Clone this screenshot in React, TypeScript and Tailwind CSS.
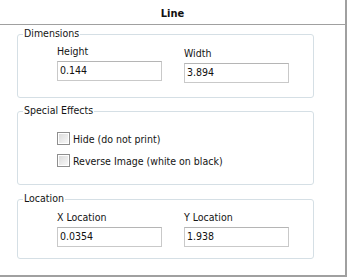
import React from "react";

const font = { fontFamily: '"DejaVu Sans Condensed", "Liberation Sans", Arial, sans-serif' };

function GroupBox({ title, className, children }: { title: string; className: string; children: React.ReactNode }) {
  return (
    <div className={`relative ml-[17px] w-[297px] rounded-[3px] border border-[#d5dfe5] ${className}`}>
      <span className="absolute left-[5px] top-[-9px] bg-white px-[1px] text-[10.5px] leading-[14px] text-[#141414]">
        {title}
      </span>
      {children}
    </div>
  );
}

function Field({ label, value, className = "" }: { label: string; value: string; className?: string }) {
  return (
    <div className={`flex w-[105px] flex-col ${className}`}>
      <span className="text-[10.5px] leading-[14px] text-[#141414]">{label}</span>
      <div className="mt-[3px] flex h-[20px] items-center border border-[#c9c9c9] border-t-[#b5b5b5] bg-white pl-[2px] text-[10.5px] text-[#111]">
        {value}
      </div>
    </div>
  );
}

function Check({ label }: { label: string }) {
  return (
    <div className="flex h-[13px] items-center gap-[3px]">
      <div className="h-[13px] w-[13px] border border-[#8f8f8f] bg-white p-[1px]">
        <div className="h-full w-full bg-gradient-to-br from-[#dcdcdc] to-[#f7f7f7]" />
      </div>
      <span className="text-[10.5px] leading-[14px] text-[#141414]">{label}</span>
    </div>
  );
}

export default function App() {
  return (
    <div className="h-[277px] w-[348px] bg-white" style={font}>
      <div className="h-[277px] w-[347px] border-b-2 border-r-2 border-[#a0a0a0]">
        <div className="h-[25px] border-b border-[#a0a0a0] pt-[7px] text-center text-[11px] font-bold leading-[14px] text-[#111]">
          Line
        </div>

        <GroupBox title="Dimensions" className="mt-[9px] h-[64px]">
          <div className="flex gap-[22px] pl-[39px] pt-[9px]">
            <Field label="Height" value="0.144" />
            <Field label="Width" value="3.894" className="mt-[2px]" />
          </div>
        </GroupBox>

        <GroupBox title="Special Effects" className="mt-[13px] h-[74px]">
          <div className="flex flex-col gap-[9px] pl-[39px] pt-[20px]">
            <Check label="Hide (do not print)" />
            <Check label="Reverse Image (white on black)" />
          </div>
        </GroupBox>

        <GroupBox title="Location" className="mt-[14px] h-[60px]">
          <div className="flex gap-[22px] pl-[39px] pt-[10px]">
            <Field label="X Location" value="0.0354" />
            <Field label="Y Location" value="1.938" />
          </div>
        </GroupBox>
      </div>
    </div>
  );
}
